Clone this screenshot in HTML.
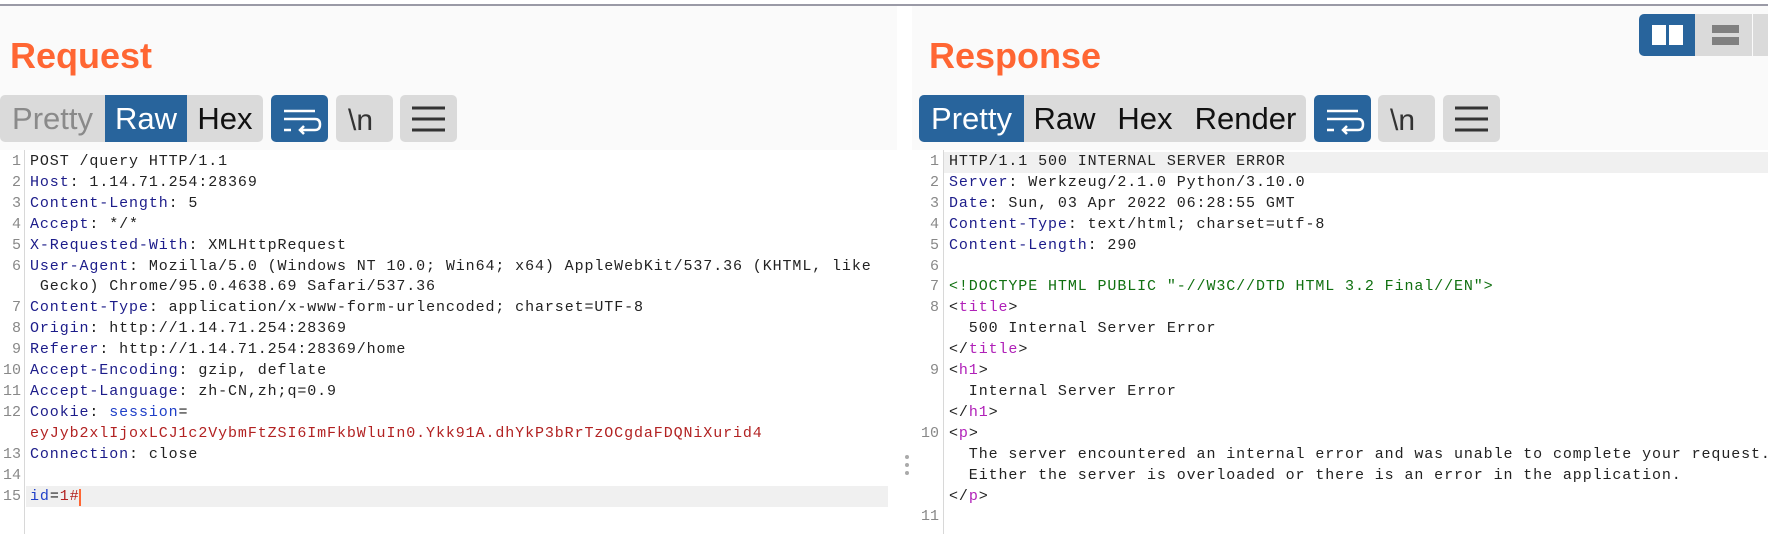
<!DOCTYPE html>
<html><head><meta charset="utf-8"><style>
*{margin:0;padding:0;box-sizing:border-box}
body{width:1768px;height:534px;background:#fff;position:relative;overflow:hidden;font-family:"Liberation Sans",sans-serif}
.topline{position:absolute;left:0;top:4px;width:1768px;height:2px;background:#9a9aa6}
.hdr{position:absolute;top:6px;height:144px;background:#fafafa}
.title{position:absolute;top:35px;font:bold 36px "Liberation Sans",sans-serif;color:#ff6633}
.tabs{position:absolute;top:95px;height:47px;background:#dadada;border-radius:5px;display:flex;overflow:hidden}
.tab{height:47px;line-height:47px;font-size:31px;color:#111;text-align:center}
.tab.on{background:#28649c;color:#fff}
.tab.dim{color:#8a8a8a}
.btn{position:absolute;top:95px;width:57px;height:47px;border-radius:5px;background:#dadada}
.btn.blue{background:#28649c}
.code{position:absolute;top:152px;font:15px/20.9px "Liberation Mono",monospace;letter-spacing:0.9px;color:#222;white-space:pre}
.gut{position:absolute;top:152px;font:15px/20.9px "Liberation Mono",monospace;color:#888;text-align:right;white-space:pre}
.gl{position:absolute;top:150px;width:1px;height:384px;background:#d8d8d8}
.k{color:#1c1c8a}.b{color:#2040c8}.r{color:#b22222}.g{color:#107010}.m{color:#b020b8}
</style></head><body>
<div class="topline"></div>
<div class="hdr" style="left:0;width:897px"></div>
<div class="hdr" style="left:912px;width:856px"></div>
<div class="title" style="left:10px">Request</div>
<div class="title" style="left:929px">Response</div>

<div class="tabs" style="left:0;width:263px">
<div class="tab dim" style="width:105px">Pretty</div><div class="tab on" style="width:82px">Raw</div><div class="tab" style="width:76px">Hex</div></div>
<div class="btn blue" style="left:271px"><svg width="57" height="47"><path d="M13 16H44M13 24H44Q49 24 49 29.5Q49 35 44 35H30M33 31L29 35L33 39M13 35H20" stroke="#fff" stroke-width="2.5" fill="none"/></svg></div>
<div class="btn" style="left:336px"><svg width="57" height="47"><text x="12" y="35" font-family="Liberation Sans" font-size="30" fill="#333">\n</text></svg></div>
<div class="btn" style="left:400px"><svg width="57" height="47"><path d="M12 13H45M12 24H45M12 35H45" stroke="#333" stroke-width="3"/></svg></div>

<div class="tabs" style="left:919px;width:387px">
<div class="tab on" style="width:105px">Pretty</div><div class="tab" style="width:81px">Raw</div><div class="tab" style="width:80px">Hex</div><div class="tab" style="width:121px">Render</div></div>
<div class="btn blue" style="left:1314px"><svg width="57" height="47"><path d="M13 16H44M13 24H44Q49 24 49 29.5Q49 35 44 35H30M33 31L29 35L33 39M13 35H20" stroke="#fff" stroke-width="2.5" fill="none"/></svg></div>
<div class="btn" style="left:1378px"><svg width="57" height="47"><text x="12" y="35" font-family="Liberation Sans" font-size="30" fill="#333">\n</text></svg></div>
<div class="btn" style="left:1443px"><svg width="57" height="47"><path d="M12 13H45M12 24H45M12 35H45" stroke="#333" stroke-width="3"/></svg></div>

<div style="position:absolute;left:1639px;top:14px;width:56px;height:42px;background:#28649c;border-radius:5px 0 0 5px"><div style="position:absolute;left:13px;top:11px;width:14px;height:20px;background:#fff"></div><div style="position:absolute;left:30px;top:11px;width:14px;height:20px;background:#fff"></div></div>
<div style="position:absolute;left:1695px;top:14px;width:57px;height:42px;background:#dadada"><div style="position:absolute;left:17px;top:11px;width:27px;height:8px;background:#808080"></div><div style="position:absolute;left:17px;top:23px;width:27px;height:8px;background:#808080"></div></div>
<div style="position:absolute;left:1753px;top:14px;width:15px;height:42px;background:#dadada"></div>

<!-- left code -->
<div style="position:absolute;left:26px;top:486px;width:862px;height:21px;background:#f0f0f0"></div>
<div class="gl" style="left:24px"></div>
<div class="gut" style="left:0;width:21px">1
2
3
4
5
6

7
8
9
10
11
12

13
14
15</div>
<div class="code" style="left:30px">POST /query HTTP/1.1
<span class="k">Host</span>: 1.14.71.254:28369
<span class="k">Content-Length</span>: 5
<span class="k">Accept</span>: */*
<span class="k">X-Requested-With</span>: XMLHttpRequest
<span class="k">User-Agent</span>: Mozilla/5.0 (Windows NT 10.0; Win64; x64) AppleWebKit/537.36 (KHTML, like
 Gecko) Chrome/95.0.4638.69 Safari/537.36
<span class="k">Content-Type</span>: application/x-www-form-urlencoded; charset=UTF-8
<span class="k">Origin</span>: http://1.14.71.254:28369
<span class="k">Referer</span>: http://1.14.71.254:28369/home
<span class="k">Accept-Encoding</span>: gzip, deflate
<span class="k">Accept-Language</span>: zh-CN,zh;q=0.9
<span class="k">Cookie</span>: <span class="b">session</span>=
<span class="r">eyJyb2xlIjoxLCJ1c2VybmFtZSI6ImFkbWluIn0.Ykk91A.dhYkP3bRrTzOCgdaFDQNiXurid4</span>
<span class="k">Connection</span>: close

<span class="b">id</span>=<span class="r">1#</span></div>
<div style="position:absolute;left:79px;top:489px;width:2px;height:17px;background:#ff6633"></div>

<div style="position:absolute;left:905px;top:455px;width:4px;height:4px;border-radius:2px;background:#aaa"></div>
<div style="position:absolute;left:905px;top:463px;width:4px;height:4px;border-radius:2px;background:#aaa"></div>
<div style="position:absolute;left:905px;top:471px;width:4px;height:4px;border-radius:2px;background:#aaa"></div>

<!-- right code -->
<div style="position:absolute;left:944px;top:152px;width:824px;height:21px;background:#f0f0f0"></div>
<div class="gl" style="left:943px"></div>
<div class="gut" style="left:912px;width:27px">1
2
3
4
5
6
7
8


9


10



11</div>
<div class="code" style="left:949px">HTTP/1.1 500 INTERNAL SERVER ERROR
<span class="k">Server</span>: Werkzeug/2.1.0 Python/3.10.0
<span class="k">Date</span>: Sun, 03 Apr 2022 06:28:55 GMT
<span class="k">Content-Type</span>: text/html; charset=utf-8
<span class="k">Content-Length</span>: 290

<span class="g">&lt;!DOCTYPE HTML PUBLIC "-//W3C//DTD HTML 3.2 Final//EN"&gt;</span>
&lt;<span class="m">title</span>&gt;
  500 Internal Server Error
&lt;/<span class="m">title</span>&gt;
&lt;<span class="m">h1</span>&gt;
  Internal Server Error
&lt;/<span class="m">h1</span>&gt;
&lt;<span class="m">p</span>&gt;
  The server encountered an internal error and was unable to complete your request.
  Either the server is overloaded or there is an error in the application.
&lt;/<span class="m">p</span>&gt;
</div>
</body></html>
